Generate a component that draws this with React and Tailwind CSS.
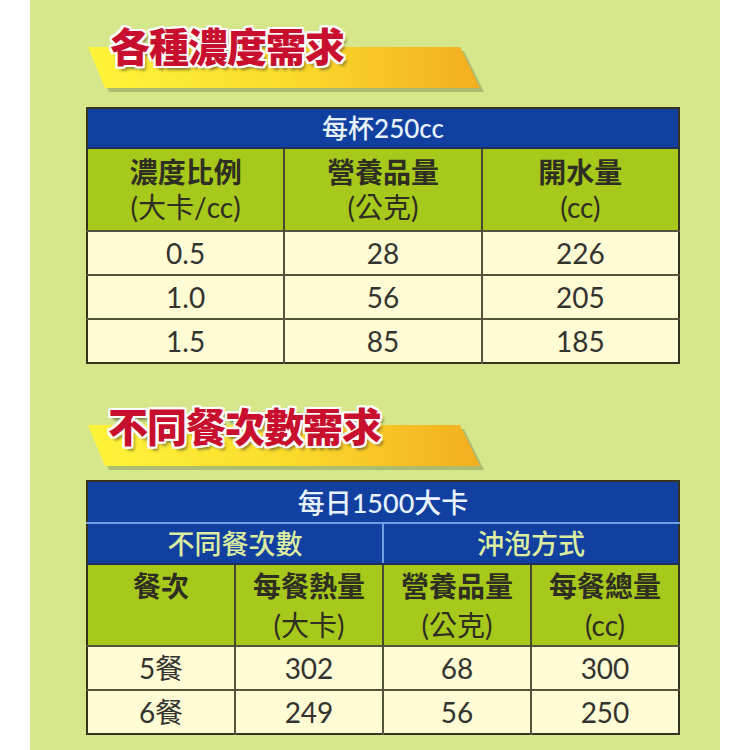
import React from "react";

const Ribbon = ({ id, top }) => (
  <svg
    className={`absolute left-[2px] ${top}`}
    width="400"
    height="50"
    viewBox="0 0 400 50"
  >
    <defs>
      <linearGradient id={id} x1="0" y1="0" x2="1" y2="0">
        <stop offset="0" stopColor="#fff43a" />
        <stop offset="0.5" stopColor="#fbdc2c" />
        <stop offset="1" stopColor="#f3ae1f" />
      </linearGradient>
    </defs>
    {/* Shadow */}
    <polygon points="4,6 376,6 396,47 21,47" fill="#8c9a5a" opacity="0.55" />
    <polygon points="0,2 372,2 392,43 17,43" fill={`url(#${id})`} />
  </svg>
);

const Banner = ({ text, id, textLeft, ribbonTop }) => (
  <div className="relative h-[64px]">
    <Ribbon id={id} top={ribbonTop} />
    <h2
      className={`relative ${textLeft} font-['Noto_Sans_CJK_TC',sans-serif] text-[40px] leading-[44px] font-black text-[#c8102e] tracking-[-1px] [text-shadow:2px_0_0_#fff,-2px_0_0_#fff,0_2px_0_#fff,0_-2px_0_#fff,2px_2px_0_#fff,-2px_-2px_0_#fff,2px_-2px_0_#fff,-2px_2px_0_#fff,3px_4px_3px_rgba(60,60,40,0.6)]`}
    >
      {text}
    </h2>
  </div>
);

const cellFont = "font-['Lato','Noto_Sans_CJK_TC',sans-serif]";

const ConcentrationTable = () => {
  const rows = [
    ["0.5", "28", "226"],
    ["1.0", "56", "205"],
    ["1.5", "85", "185"],
  ];
  return (
    <table className={`w-full table-fixed border-collapse border-2 border-[#34341f] ${cellFont}`}>
      <thead>
        <tr className="h-[40px] bg-[#1140a0]">
          <th colSpan={3} className="text-[26px] font-medium text-[#e8f2ff] leading-none border-b-2 border-[#20305a]">
            每杯250cc
          </th>
        </tr>
        <tr className="h-[83px] bg-[#a7c91b] text-[#2e2e22] text-[28px] leading-[35px]">
          <th className="border-r-2 border-[#4a4a30] font-bold">
            濃度比例
            <div className="font-normal">(大卡/cc)</div>
          </th>
          <th className="border-r-2 border-[#4a4a30] font-bold">
            營養品量
            <div className="font-normal">(公克)</div>
          </th>
          <th className="font-bold">
            開水量
            <div className="font-normal">(cc)</div>
          </th>
        </tr>
      </thead>
      <tbody>
        {rows.map((r) => (
          <tr key={r[0]} className="h-[41px] bg-[#fffcd6] text-[28px] text-[#333330] border-t-2 border-[#55553d]">
            <td className="text-center border-r-2 border-[#55553d]">{r[0]}</td>
            <td className="text-center border-r-2 border-[#55553d]">{r[1]}</td>
            <td className="text-center">{r[2]}</td>
          </tr>
        ))}
      </tbody>
    </table>
  );
};

const MealTable = () => {
  const rows = [
    ["5餐", "302", "68", "300"],
    ["6餐", "249", "56", "250"],
  ];
  const heads = [
    ["餐次", ""],
    ["每餐熱量", "(大卡)"],
    ["營養品量", "(公克)"],
    ["每餐總量", "(cc)"],
  ];
  return (
    <table className={`w-full table-fixed border-collapse border-2 border-[#34341f] ${cellFont}`}>
      <thead>
        <tr className="h-[42px] bg-[#1140a0]">
          <th colSpan={4} className="text-[27px] font-medium text-[#e8f2ff] leading-none border-b-2 border-[#6f9ee0]">
            每日1500大卡
          </th>
        </tr>
        <tr className="h-[41px] bg-[#1140a0] text-[27px] text-[#dceda0] leading-none">
          <th colSpan={2} className="font-medium border-r-2 border-[#6f9ee0] border-b-2 border-b-[#20305a]">
            不同餐次數
          </th>
          <th colSpan={2} className="font-medium border-b-2 border-b-[#20305a]">
            沖泡方式
          </th>
        </tr>
        <tr className="h-[80px] bg-[#a7c91b] text-[#2e2e22] text-[28px] leading-[39px]">
          {heads.map((h, i) => (
            <th
              key={h[0]}
              className={`align-top pt-[2px] font-bold ${i < 3 ? "border-r-2 border-[#4a4a30]" : ""}`}
            >
              {h[0]}
              <div className="font-normal">{h[1] || "\u00a0"}</div>
            </th>
          ))}
        </tr>
      </thead>
      <tbody>
        {rows.map((r) => (
          <tr key={r[0]} className="h-[42px] bg-[#fffcd6] text-[28px] text-[#333330] border-t-2 border-[#55553d]">
            {r.map((c, i) => (
              <td key={i} className={`text-center ${i < 3 ? "border-r-2 border-[#55553d]" : ""}`}>
                {c}
              </td>
            ))}
          </tr>
        ))}
      </tbody>
    </table>
  );
};

export default function App() {
  return (
    <div className="w-[750px] h-[750px] bg-white overflow-hidden">
      <div className="ml-[30px] w-[690px] h-[750px] bg-[#d5e78a] pl-[56px] pr-[40px] pt-[23px]">
        <Banner text="各種濃度需求" id="rib1" textLeft="left-[24px]" ribbonTop="top-[22px]" />
        <div className="mt-[20px]">
          <ConcentrationTable />
        </div>
        <div className="mt-[39px]">
          <Banner text="不同餐次數需求" id="rib2" textLeft="left-[22px]" ribbonTop="top-[20px]" />
        </div>
        <div className="mt-[13px]">
          <MealTable />
        </div>
      </div>
    </div>
  );
}
